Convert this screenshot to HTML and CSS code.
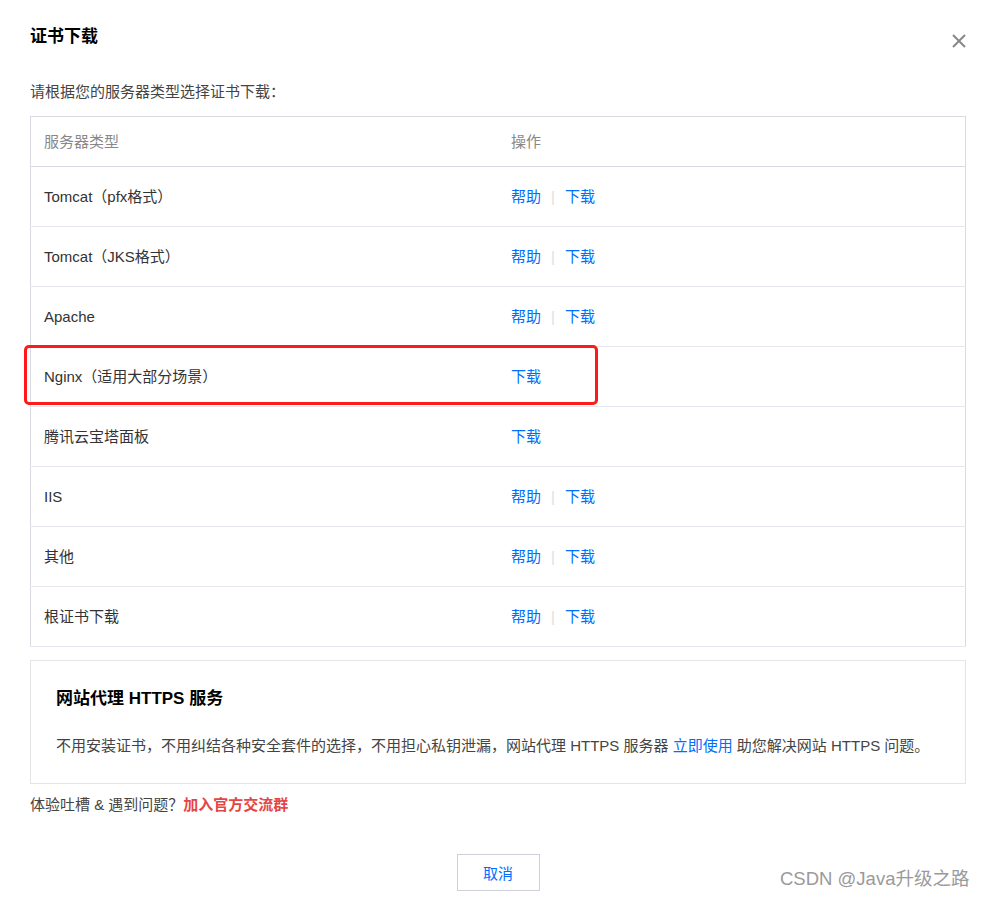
FILE: index.html
```html
<!DOCTYPE html>
<html lang="zh-CN">
<head>
    <meta charset="UTF-8">
    <meta name="viewport" content="width=device-width, initial-scale=1.0">
    <title>证书下载</title>
    <link rel="stylesheet" href="styles.css">
</head>
<body>

    <div class="dialog">
        <div class="dialog-head">
            <h3>证书下载</h3>
            <span class="close">
                <svg width="16" height="16" viewBox="0 0 16 16"><path d="M2 2L14 14M14 2L2 14" stroke="#888" stroke-width="2" fill="none"/></svg>
            </span>
        </div>

        <p class="tip">请根据您的服务器类型选择证书下载：</p>

        <div class="table-wrap">
            <table class="table">
                <tr>
                    <th>服务器类型</th>
                    <th>操作</th>
                </tr>
                <tr>
                    <td>Tomcat（pfx格式）</td>
                    <td><a>帮助</a><span class="sep">|</span><a>下载</a></td>
                </tr>
                <tr>
                    <td>Tomcat（JKS格式）</td>
                    <td><a>帮助</a><span class="sep">|</span><a>下载</a></td>
                </tr>
                <tr>
                    <td>Apache</td>
                    <td><a>帮助</a><span class="sep">|</span><a>下载</a></td>
                </tr>
                <tr>
                    <td>Nginx（适用大部分场景）</td>
                    <td><a>下载</a></td>
                </tr>
                <tr>
                    <td>腾讯云宝塔面板</td>
                    <td><a>下载</a></td>
                </tr>
                <tr>
                    <td>IIS</td>
                    <td><a>帮助</a><span class="sep">|</span><a>下载</a></td>
                </tr>
                <tr>
                    <td>其他</td>
                    <td><a>帮助</a><span class="sep">|</span><a>下载</a></td>
                </tr>
                <tr>
                    <td>根证书下载</td>
                    <td><a>帮助</a><span class="sep">|</span><a>下载</a></td>
                </tr>
            </table>
            <!-- 标注框 -->
            <div class="mark"></div>
        </div>

        <div class="service">
            <h4>网站代理 HTTPS 服务</h4>
            <p>不用安装证书，不用纠结各种安全套件的选择，不用担心私钥泄漏，网站代理 HTTPS 服务器 <a>立即使用</a> 助您解决网站 HTTPS 问题。</p>
        </div>

        <p class="feedback">体验吐槽 &amp; 遇到问题？<a>加入官方交流群</a></p>

        <div class="buttons">
            <button class="cancel">取消</button>
        </div>
    </div>

    <div class="watermark">CSDN @Java升级之路</div>

</body>
</html>
```

FILE: styles.css
```css
body {
    margin: 0;
    background-color: #fff;
    font-family: "Liberation Sans", "Noto Sans CJK SC", sans-serif;
    font-size: 15px;
    color: #333;
}
.dialog {
    padding: 0 20px 0 30px;
}
.dialog-head {
    display: flex;
    justify-content: space-between;
    align-items: flex-start;
    padding-top: 27px;
}
.dialog-head h3 {
    margin: 0;
    font-size: 17px;
    line-height: 20px;
    font-weight: bold;
    color: #000;
}
.close {
    margin-top: 6px;
    margin-right: -1px;
    line-height: 0;
}
.tip {
    margin: 33px 0 14px;
    line-height: 20px;
    color: #444;
}
.table-wrap {
    position: relative;
}
.table {
    width: 100%;
    border-collapse: collapse;
    table-layout: fixed;
    border: 1px solid #d8dbe3;
}
.table th, .table td {
    width: 50%;
    padding: 0 13px;
    text-align: left;
    line-height: 20px;
    border-bottom: 1px solid #e5e8ee;
}
.table th {
    height: 49px;
    font-weight: normal;
    color: #888;
    border-bottom-color: #d8dbe3;
}
.table td {
    height: 59px;
}
.table a {
    color: #006eff;
}
.sep {
    color: #ddd;
    margin: 0 10px 0 10px;
}
.mark {
    position: absolute;
    left: -6px;
    top: 229px;
    width: 568px;
    height: 54px;
    border: 3px solid #ff1a1a;
    border-radius: 5px;
}
.service {
    margin-top: 13px;
    border: 1px solid #e5e5e5;
    padding: 28px 25px 27px;
}
.service h4 {
    margin: 0;
    font-size: 17px;
    line-height: 20px;
    font-weight: bold;
    color: #000;
}
.service p {
    margin: 27px 0 0;
    line-height: 20px;
    color: #444;
}
.service a {
    color: #006eff;
}
.feedback {
    margin: 11px 0 0;
    line-height: 20px;
    color: #444;
}
.feedback a {
    color: #e54545;
    font-weight: bold;
}
.buttons {
    display: flex;
    justify-content: center;
    margin-top: 39px;
}
.cancel {
    width: 83px;
    height: 37px;
    border: 1px solid #cdd0da;
    background-color: #fff;
    color: #006eff;
    font-family: inherit;
    font-size: 15px;
    cursor: pointer;
}
.watermark {
    position: absolute;
    left: 780px;
    top: 868px;
    font-size: 18.5px;
    line-height: 22px;
    color: #9a9a9a;
}
```
